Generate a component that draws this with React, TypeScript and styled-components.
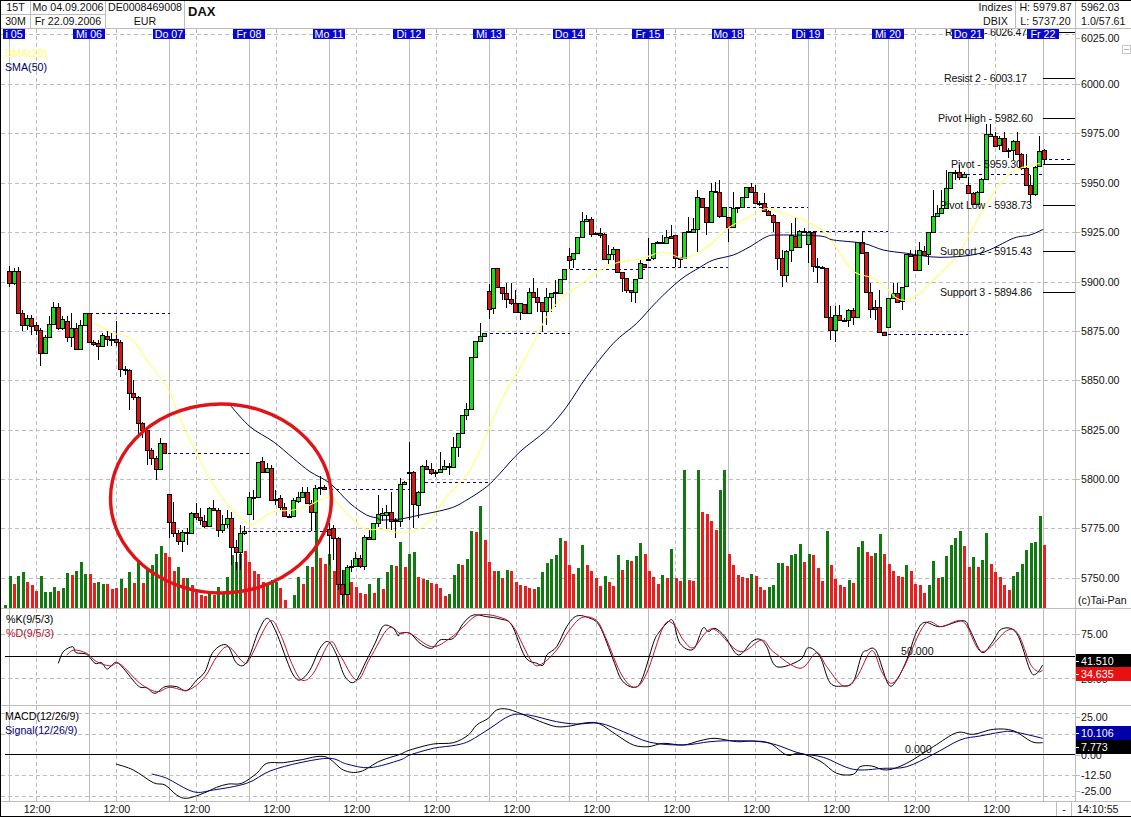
import styled, { createGlobalStyle } from 'styled-components';

type Candle = [number, number, number, number, number];
type Point = [number, number];

const GlobalStyle = createGlobalStyle`
  html, body {
    margin: 0;
    padding: 0;
    background: #fff;
  }
  body {
    font-family: "Liberation Sans", Arial, sans-serif;
    font-size: 10.67px;
    color: #111;
  }
`;

// top, bottom, high, low, green (pixel rows of the price pane), first entry is bar 2
const CANDLES: Candle[] = [
  [271, 283, 266, 287, 0], [271, 283, 268, 285, 1], [271, 313, 267, 314, 0], [313, 325, 310, 331, 0],
  [318, 325, 315, 330, 1], [318, 326, 315, 335, 0], [325, 330, 322, 335, 0], [330, 353, 328, 366, 0],
  [337, 353, 335, 354, 1], [324, 337, 316, 338, 1], [307, 324, 302, 325, 1], [307, 328, 303, 330, 0],
  [319, 328, 316, 330, 1], [321, 337, 316, 342, 0], [328, 337, 313, 347, 1], [328, 349, 323, 350, 0],
  [325, 349, 320, 350, 1], [313, 325, 313, 325, 1], [313, 342, 313, 343, 0], [342, 344, 340, 346, 0],
  [343, 346, 340, 360, 0], [335, 346, 333, 346, 1], [336, 339, 331, 346, 0], [339, 340, 333, 346, 0],
  [339, 342, 321, 346, 0], [342, 369, 340, 377, 0], [369, 370, 366, 375, 0], [370, 393, 369, 410, 0],
  [393, 397, 380, 400, 0], [397, 423, 396, 435, 0], [423, 430, 422, 438, 0], [430, 450, 428, 465, 0],
  [450, 458, 448, 465, 0], [458, 469, 456, 480, 0], [443, 469, 438, 470, 1], [443, 453, 443, 453, 0],
  [494, 522, 494, 538, 0], [522, 533, 502, 537, 0], [533, 541, 530, 545, 0], [532, 541, 530, 552, 1],
  [532, 533, 528, 545, 0], [513, 533, 512, 534, 1], [513, 517, 503, 520, 0], [517, 520, 508, 525, 0],
  [521, 526, 515, 528, 0], [508, 526, 507, 527, 1], [508, 510, 500, 511, 0], [510, 530, 508, 537, 0],
  [524, 530, 515, 533, 1], [518, 524, 510, 528, 1], [518, 547, 512, 565, 0], [547, 552, 540, 570, 0],
  [533, 552, 525, 570, 1], [531, 533, 526, 535, 1], [497, 514, 492, 515, 1], [497, 498, 490, 520, 1],
  [462, 497, 462, 498, 1], [461, 472, 457, 473, 0], [468, 472, 463, 473, 1], [468, 500, 465, 501, 0],
  [499, 500, 490, 505, 0], [498, 507, 495, 510, 0], [507, 516, 503, 517, 0], [516, 517, 514, 518, 0],
  [500, 516, 498, 517, 1], [497, 501, 492, 503, 1], [492, 497, 487, 498, 1], [492, 503, 487, 504, 0],
  [503, 512, 500, 531, 0], [488, 512, 485, 530, 1], [487, 488, 476, 495, 1], [487, 489, 485, 490, 0],
  [529, 535, 523, 565, 0], [528, 538, 525, 560, 0], [538, 584, 537, 590, 0], [584, 594, 570, 605, 0],
  [567, 594, 565, 595, 1], [566, 567, 560, 572, 1], [558, 566, 552, 567, 1], [558, 566, 555, 568, 0],
  [537, 566, 535, 570, 1], [537, 539, 530, 540, 0], [523, 539, 523, 540, 1], [514, 523, 495, 527, 1],
  [513, 515, 508, 521, 1], [512, 515, 505, 529, 1], [512, 521, 492, 530, 0], [520, 521, 518, 538, 0],
  [484, 521, 478, 527, 1], [482, 484, 481, 485, 1], [472, 473, 442, 520, 0], [472, 504, 471, 528, 0],
  [492, 505, 491, 518, 1], [466, 492, 465, 493, 1], [466, 469, 460, 470, 0], [469, 473, 463, 475, 0],
  [472, 473, 470, 477, 0], [469, 472, 452, 473, 1], [466, 469, 460, 470, 1], [466, 467, 463, 475, 0],
  [447, 467, 437, 468, 1], [433, 447, 433, 457, 1], [415, 433, 415, 434, 1], [409, 415, 403, 420, 1],
  [357, 409, 357, 410, 1], [341, 357, 341, 358, 1], [336, 341, 323, 341, 1], [333, 336, 333, 336, 1],
  [291, 309, 284, 319, 0], [268, 308, 268, 314, 1], [268, 287, 268, 288, 0], [287, 293, 287, 300, 0],
  [293, 299, 283, 308, 0], [299, 303, 283, 305, 0], [303, 312, 290, 312, 0], [303, 312, 303, 320, 1],
  [304, 313, 304, 313, 0], [292, 313, 288, 314, 1], [292, 297, 278, 298, 0], [297, 302, 288, 312, 0],
  [302, 311, 302, 332, 0], [297, 311, 288, 325, 1], [293, 297, 293, 312, 1], [292, 293, 280, 307, 0],
  [279, 293, 279, 294, 1], [269, 279, 269, 280, 1], [256, 260, 248, 269, 0], [253, 259, 253, 268, 1],
  [237, 253, 237, 254, 1], [221, 237, 212, 238, 1], [219, 221, 215, 222, 1], [219, 234, 217, 237, 0],
  [233, 234, 232, 235, 0], [233, 235, 228, 238, 0], [234, 259, 233, 260, 0], [254, 259, 245, 264, 1],
  [249, 254, 247, 260, 1], [249, 272, 249, 273, 0], [272, 278, 272, 292, 0], [278, 290, 278, 293, 0],
  [290, 292, 290, 302, 0], [279, 292, 279, 303, 1], [263, 278, 260, 279, 1], [264, 267, 264, 267, 0],
  [259, 260, 238, 260, 0], [243, 258, 243, 260, 1], [242, 243, 241, 244, 1], [242, 243, 235, 244, 1],
  [237, 243, 230, 244, 1], [236, 238, 225, 239, 0], [235, 258, 235, 267, 0], [257, 259, 257, 267, 0],
  [232, 258, 232, 259, 1], [231, 232, 217, 233, 1], [229, 232, 218, 232, 1], [197, 229, 190, 252, 1],
  [198, 207, 198, 208, 0], [207, 222, 207, 235, 0], [191, 222, 183, 222, 1], [191, 192, 182, 193, 1],
  [192, 216, 180, 218, 0], [207, 216, 207, 217, 1], [217, 227, 217, 242, 0], [208, 227, 192, 227, 1],
  [207, 208, 207, 213, 1], [197, 207, 197, 208, 1], [187, 197, 187, 198, 1], [187, 192, 183, 192, 0],
  [192, 203, 185, 204, 0], [203, 204, 201, 206, 0], [203, 211, 193, 212, 0], [211, 215, 210, 216, 0],
  [215, 222, 214, 232, 0], [222, 258, 222, 270, 0], [258, 275, 250, 287, 0], [251, 275, 250, 282, 1],
  [235, 250, 223, 262, 1], [236, 247, 217, 248, 0], [231, 247, 230, 248, 1], [231, 232, 228, 233, 1],
  [232, 244, 231, 263, 1], [232, 266, 231, 272, 0], [266, 267, 258, 283, 0], [267, 268, 266, 269, 0],
  [268, 317, 268, 318, 0], [317, 330, 306, 340, 0], [315, 330, 306, 342, 1], [315, 320, 305, 321, 0],
  [320, 321, 318, 322, 0], [310, 320, 309, 327, 1], [310, 317, 308, 325, 0], [242, 317, 242, 318, 1],
  [242, 253, 232, 254, 0], [252, 292, 252, 293, 0], [292, 309, 283, 318, 0], [307, 309, 300, 320, 0],
  [307, 332, 290, 333, 0], [332, 335, 332, 335, 0], [298, 327, 298, 328, 1], [293, 298, 283, 299, 1],
  [293, 302, 283, 303, 0], [287, 301, 287, 310, 1], [254, 286, 254, 287, 1], [254, 256, 250, 257, 0],
  [255, 270, 250, 271, 0], [250, 270, 242, 271, 1], [251, 255, 246, 256, 0], [232, 254, 232, 265, 1],
  [216, 232, 190, 233, 1], [213, 216, 205, 217, 1], [208, 213, 190, 214, 1], [188, 208, 170, 209, 1],
  [172, 188, 172, 189, 1], [172, 173, 170, 180, 0], [172, 177, 165, 180, 0], [174, 177, 172, 178, 1],
  [185, 193, 177, 194, 0], [193, 204, 192, 204, 0], [192, 204, 191, 205, 1], [179, 192, 178, 193, 1],
  [134, 179, 124, 180, 1], [134, 136, 124, 137, 1], [136, 146, 132, 147, 0], [138, 145, 136, 150, 1],
  [138, 151, 132, 152, 0], [150, 151, 148, 158, 0], [141, 150, 140, 160, 1], [141, 154, 132, 155, 0],
  [154, 168, 153, 170, 0], [168, 185, 154, 186, 0], [185, 194, 175, 203, 0], [167, 194, 166, 196, 1],
  [151, 166, 136, 167, 1], [150, 159, 149, 165, 0],
];

// top row of each volume bar, negative means red, first entry is bar 1
const VOLUMES = [
  605, 576, -584, 576, 572, -582, -585, -591, 576, 592, 592, 587, -591, 588, 573, -575, 571, 562, 574, -574,
  -583, 582, 584, -584, -589, -588, 579, -588, 572, -583, 560, -583, 568, 565, 554, 546, -553, -557, -571, 567,
  -578, 578, -585, -591, -595, -596, 593, -595, 587, 593, 577, 555, 562, 554, -551, -562, -571, -574, -582, 584,
  580, 582, -588, -600, 608, 595, 577, -584, 566, -567, 513, -558, -564, 554, -571, -570, 570, -568, -582, -587,
  -593, -594, 584, -593, 578, -589, 572, 565, -566, 542, -567, 554, 552, -577, -579, 580, -583, -584, -588, -596,
  594, 575, 564, -565, 559, 531, -532, 506, -540, -562, -571, 571, -578, 570, -571, -582, -585, -586, -588, -589,
  587, 572, 563, 559, 555, 538, -541, -565, -574, 568, 545, -565, -571, -578, -586, 576, -582, -586, 555, -570,
  560, -561, 556, 543, -554, -571, -577, -584, 575, -578, 549, -578, -581, 470, -580, -581, 470, -512, -514, -521,
  -530, 490, 470, -554, -565, -575, -577, -578, 574, -576, -587, -590, 587, 585, 563, 563, -566, 555, 554, 544,
  -562, 554, -555, -568, -581, 531, -565, -579, -585, -587, 580, -583, 547, 541, -552, -556, 553, 534, -554, -564,
  -571, -576, -577, 565, -571, -584, -585, -593, 585, 561, -578, 577, 556, 545, 538, 531, -546, -567, 557, -567,
  560, 533, -564, -572, -577, -585, -590, 576, 572, 564, 550, 543, 542, 516, -545,
];

// line points were read off 3x crops, so they carry the crop origin
const crop = (ox: number, oy: number, pts: number[][]): Point[] =>
  pts.map(([x, y]) => [ox + x / 3, oy + y / 3]);

const SMA20: Point[] = [
  ...crop(0, 280, [[282, 130], [340, 160], [370, 165], [405, 188], [440, 240], [500, 320], [530, 390], [560, 460], [590, 520], [630, 600], [680, 670], [730, 720], [760, 733], [800, 705], [830, 693], [880, 690], [930, 675], [970, 655], [1000, 658], [1040, 700], [1090, 745], [1135, 748]]),
  ...crop(380, 180, [[0, 1048], [50, 1057], [110, 1050], [150, 1020], [200, 950], [260, 885], [300, 810], [330, 740], [370, 650], [410, 580], [460, 490], [500, 410], [550, 350], [600, 315], [660, 270], [710, 248], [780, 237], [850, 217], [910, 235], [960, 215], [1000, 185], [1050, 140], [1100, 115]]),
  ...crop(750, 170, [[50, 115], [100, 130], [170, 155], [215, 180], [250, 220], [290, 280], [320, 310], [370, 325], [415, 360], [440, 385], [470, 390], [510, 370]]),
  ...crop(800, 0, [[400, 840], [470, 770], [510, 700], [560, 610], [620, 530], [660, 505], [720, 490]]),
];

const SMA50: Point[] = [
  ...crop(0, 280, [[690, 375], [750, 440], [820, 485], [880, 535], [930, 575], [990, 610], [1050, 670], [1100, 705], [1135, 715]]),
  ...crop(380, 180, [[0, 1020], [60, 1017], [120, 1005], [210, 985], [260, 960], [320, 920], [360, 880], [420, 815], [500, 750], [560, 680], [620, 590], [700, 490], [770, 430], [830, 365], [900, 300], [960, 262], [1000, 240], [1060, 225], [1110, 200]]),
  ...crop(750, 170, [[50, 200], [90, 195], [210, 198], [250, 210], [340, 220], [400, 240], [470, 250]]),
  ...crop(800, 0, [[420, 772], [540, 760], [640, 715], [690, 705], [730, 688]]),
];

const STOCH_K: Point[] = [
  ...crop(0, 600, [[175, 190], [190, 155], [218, 140], [228, 158], [260, 163], [285, 190], [305, 188], [322, 207], [347, 187], [370, 205], [415, 258], [440, 263], [465, 280], [495, 260], [530, 260], [560, 272], [590, 240], [615, 215], [640, 155], [680, 135], [710, 190], [740, 187], [775, 95], [802, 55], [830, 100], [860, 180], [880, 225], [900, 240], [930, 210], [960, 145], [985, 125], [1010, 165], [1035, 230], [1065, 245], [1100, 180], [1125, 130], [1150, 78], [1180, 85], [1195, 108]]),
  ...crop(400, 600, [[0, 100], [30, 100], [60, 130], [95, 145], [120, 120], [160, 115], [190, 70], [220, 45], [260, 50], [300, 57], [335, 75], [375, 170], [410, 190], [430, 195], [440, 165], [470, 140], [500, 80], [530, 48], [570, 55], [600, 80], [640, 180], [665, 240], [700, 262], [725, 240], [760, 130], [775, 100], [805, 65], [820, 65], [840, 130], [880, 148], [908, 85], [925, 95], [945, 85], [975, 110], [1015, 165], [1055, 125], [1080, 118], [1100, 140], [1130, 200]]),
  ...crop(800, 600, [[0, 180], [25, 143], [60, 170], [90, 248], [130, 258], [160, 245], [185, 165], [200, 152], [228, 152], [265, 253], [290, 240], [320, 180], [350, 95], [375, 67], [420, 80], [490, 62], [510, 90], [545, 157], [575, 130], [605, 87], [650, 100], [690, 210], [708, 222], [728, 195]]),
];

const STOCH_D: Point[] = [
  ...crop(0, 600, [[200, 165], [222, 150], [260, 160], [290, 185], [330, 198], [360, 192], [420, 250], [470, 275], [510, 262], [565, 270], [615, 230], [650, 170], [685, 140], [730, 187], [750, 175], [808, 65], [840, 100], [875, 190], [905, 240], [940, 220], [990, 127], [1020, 165], [1070, 240], [1110, 175], [1165, 85], [1200, 100]]),
  ...crop(400, 600, [[30, 100], [95, 140], [150, 115], [190, 80], [235, 45], [300, 52], [340, 80], [395, 185], [425, 192], [470, 150], [505, 95], [545, 53], [590, 62], [620, 120], [665, 225], [705, 262], [740, 220], [790, 80], [820, 72], [850, 120], [880, 143], [920, 95], [950, 92], [1020, 155], [1085, 120], [1120, 155]]),
  ...crop(800, 600, [[0, 205], [50, 158], [80, 200], [130, 258], [170, 232], [215, 152], [245, 215], [275, 250], [310, 205], [375, 72], [425, 80], [490, 65], [545, 155], [620, 92], [655, 103], [690, 190], [715, 215], [728, 210]]),
];

const MACD: Point[] = [
  ...crop(0, 600, [[348, 492], [400, 510], [460, 548], [495, 555], [530, 585], [560, 595], [610, 580], [650, 562], [685, 552], [725, 550], [770, 520], [800, 490], [850, 488], [900, 480], [975, 470], [1030, 510], [1080, 515], [1140, 483]]),
  ...crop(400, 600, [[0, 463], [30, 450], [100, 432], [160, 428], [205, 405], [230, 375], [265, 355], [290, 330], [325, 328], [380, 348], [430, 368], [470, 380], [510, 378], [560, 368], [600, 372], [650, 405], [700, 435], [745, 440], [790, 430], [850, 435], [900, 422], [945, 415], [1010, 425], [1060, 423], [1110, 430], [1160, 465]]),
  ...crop(800, 600, [[0, 460], [60, 483], [110, 520], [160, 523], [180, 500], [215, 498], [260, 510], [320, 490], [400, 440], [470, 398], [520, 403], [580, 388], [640, 392], [695, 425], [728, 428]]),
];

const SIGNAL: Point[] = [
  ...crop(0, 600, [[455, 522], [500, 535], [580, 575], [640, 570], [740, 550], [810, 513], [900, 488], [990, 475], [1040, 492], [1110, 503]]),
  ...crop(400, 600, [[0, 480], [30, 465], [100, 445], [170, 435], [210, 422], [270, 385], [330, 347], [385, 345], [470, 365], [530, 372], [600, 370], [670, 395], [750, 427], [850, 435], [930, 425], [1000, 422], [1080, 425], [1130, 435]]),
  ...crop(800, 600, [[0, 460], [70, 472], [160, 508], [250, 505], [320, 500], [400, 463], [480, 420], [540, 408], [600, 397], [640, 395], [728, 415]]),
];

const DAY_LINES = [9, 89, 169, 249, 329, 409, 489, 569, 648, 728, 808, 888, 968, 1043];
const NOON_LINES = [36, 116, 196, 276, 356, 436, 516, 596, 675, 755, 835, 915, 995];
const PRICE_ROWS = [34, 84, 133, 183, 232, 282, 331, 380, 430, 479, 528, 578];

const DAY_TAGS: [string, number][] = [
  ['i 05', 3], ['Mi 06', 73], ['Do 07', 153], ['Fr 08', 233], ['Mo 11', 313], ['Di 12', 393], ['Mi 13', 473],
  ['Do 14', 553], ['Fr 15', 632], ['Mo 18', 712], ['Di 19', 792], ['Mi 20', 872], ['Do 21', 952], ['Fr 22', 1027],
];

const PIVOT_DASHES: [number, number, number][] = [
  [90, 170, 313], [168, 250, 453], [248, 330, 531], [330, 410, 489], [425, 490, 482], [490, 570, 333],
  [570, 648, 269], [648, 728, 267], [729, 808, 207], [808, 888, 231], [888, 968, 334], [967, 1043, 174], [1043, 1070, 159],
];

const LEVELS: [string, number, number, number][] = [
  ['Resist 1 - 6026.47', 945, 82, 32],
  ['Resist 2 - 6003.17', 944, 83, 78],
  ['Pivot High - 5982.60', 938, 95, 118],
  ['Pivot - 5959.30', 951, 71, 164],
  ['Pivot Low - 5938.73', 940, 92, 205],
  ['Support 2 - 5915.43', 940, 92, 251],
  ['Support 3 - 5894.86', 940, 92, 292],
];

const PRICE_TICKS: [string, number][] = [
  ['6025.00', 38], ['6000.00', 84], ['5975.00', 133], ['5950.00', 183], ['5925.00', 232], ['5900.00', 282],
  ['5875.00', 331], ['5850.00', 380], ['5825.00', 430], ['5800.00', 479], ['5775.00', 528], ['5750.00', 578],
];

const barX = (k: number) => 0.7 + 4.44 * k;

// catmull-rom through the measured points, the lines in the chart are soft
const toPath = (pts: Point[]) => {
  let d = `M${pts[0][0].toFixed(1)} ${pts[0][1].toFixed(1)}`;
  for (let i = 0; i < pts.length - 1; i++) {
    const p0 = pts[Math.max(i - 1, 0)];
    const p1 = pts[i];
    const p2 = pts[i + 1];
    const p3 = pts[Math.min(i + 2, pts.length - 1)];
    const c1x = p1[0] + (p2[0] - p0[0]) / 6;
    const c1y = p1[1] + (p2[1] - p0[1]) / 6;
    const c2x = p2[0] - (p3[0] - p1[0]) / 6;
    const c2y = p2[1] - (p3[1] - p1[1]) / 6;
    d += `C${c1x.toFixed(1)} ${c1y.toFixed(1)} ${c2x.toFixed(1)} ${c2y.toFixed(1)} ${p2[0].toFixed(1)} ${p2[1].toFixed(1)}`;
  }
  return d;
};

function VerticalGrid({ top, bottom }: { top: number; bottom: number }) {
  return (
    <>
      {NOON_LINES.map((x) => (
        <GridDash key={x} x1={x + 0.5} x2={x + 0.5} y1={top} y2={bottom} />
      ))}
      {DAY_LINES.map((x) => (
        <GridSolid key={x} x1={x + 0.5} x2={x + 0.5} y1={top} y2={bottom} />
      ))}
    </>
  );
}

function PricePlot() {
  return (
    <Plot viewBox="1 29 1074 579" width="1074" height="579">
      <VerticalGrid top={29} bottom={608} />
      {PRICE_ROWS.map((y) => (
        <GridDash key={y} x1={1} x2={1075} y1={y + 0.5} y2={y + 0.5} />
      ))}

      {VOLUMES.map((v, i) => {
        const top = Math.abs(v);
        return (
          <VolumeBar
            key={i}
            $up={v > 0}
            x={Math.round(barX(i + 1)) - 1}
            y={top}
            width={3}
            height={608 - top}
          />
        );
      })}

      {PIVOT_DASHES.map(([x1, x2, y]) => (
        <PivotDash key={`${x1}-${y}`} x1={x1} x2={x2} y1={y + 0.5} y2={y + 0.5} />
      ))}

      {CANDLES.map(([top, bottom, high, low, up], i) => {
        const c = Math.floor(barX(i + 2)) + 0.5;
        return (
          <g key={i}>
            <Wick x1={c} x2={c} y1={high} y2={low} />
            <CandleBody $up={!!up} x={c - 2} y={top + 0.5} width={4} height={Math.max(bottom - top, 1)} />
          </g>
        );
      })}

      <Sma20Line d={toPath(SMA20)} />
      <Sma50Line d={toPath(SMA50)} />

      {LEVELS.map(([label, x, width, y]) => (
        <g key={label}>
          <PlotText x={x} y={y + 4} textLength={width} lengthAdjust="spacing">
            {label}
          </PlotText>
          <LevelLine x1={1043} x2={1075} y1={y + 0.5} y2={y + 0.5} />
        </g>
      ))}

      {DAY_TAGS.map(([label, x]) => (
        <g key={label}>
          <DayTagBox x={x} y={29} width={x === 3 ? 22 : 32} height={10} />
          <DayTagText x={x + (x === 3 ? 11 : 16)} y={38}>
            {label}
          </DayTagText>
        </g>
      ))}

      <Legend $color="#ffff66" x={5} y={57}>SMA(20)</Legend>
      <Legend $color="#000066" x={5} y={71}>SMA(50)</Legend>

      <Circle cx={221} cy={498.5} rx={110.5} ry={94.5} />
    </Plot>
  );
}

function StochPlot() {
  return (
    <Plot viewBox="1 609 1074 96" width="1074" height="96">
      <VerticalGrid top={609} bottom={705} />
      {[634, 678].map((y) => (
        <GridDash key={y} x1={1} x2={1075} y1={y + 0.5} y2={y + 0.5} />
      ))}
      <ZeroLine x1={5} x2={1075} y1={656.5} y2={656.5} />
      <PlotText x={901} y={655}>50.000</PlotText>
      <IndicatorLine $color="#000" d={toPath(STOCH_K)} />
      <IndicatorLine $color="#c0102a" d={toPath(STOCH_D)} />
      <Legend $color="#000" x={6} y={623}>%K(9/5/3)</Legend>
      <Legend $color="#b01030" x={6} y={637}>%D(9/5/3)</Legend>
    </Plot>
  );
}

function MacdPlot() {
  return (
    <Plot viewBox="1 706 1074 95" width="1074" height="95">
      <VerticalGrid top={706} bottom={801} />
      {[713, 734, 775, 796].map((y) => (
        <GridDash key={y} x1={1} x2={1075} y1={y + 0.5} y2={y + 0.5} />
      ))}
      <ZeroLine x1={5} x2={1075} y1={754.5} y2={754.5} />
      <PlotText x={905} y={753}>0.000</PlotText>
      <IndicatorLine $color="#000" d={toPath(MACD)} />
      <IndicatorLine $color="#000080" d={toPath(SIGNAL)} />
      <Legend $color="#000" x={5} y={720}>MACD(12/26/9)</Legend>
      <Legend $color="#000080" x={5} y={734}>Signal(12/26/9)</Legend>
    </Plot>
  );
}

export default function App() {
  return (
    <Window>
      <GlobalStyle />
      <Header>
        <InfoCell $width={30} $split>
          <span>15T</span>
          <span>30M</span>
        </InfoCell>
        <InfoCell $width={75} $split>
          <span>Mo 04.09.2006</span>
          <span>Fr 22.09.2006</span>
        </InfoCell>
        <InfoCell $width={79}>
          <span>DE0008469008</span>
          <span>EUR</span>
        </InfoCell>
        <Title>
          <strong>DAX</strong>
        </Title>
        <InfoCell $width={40}>
          <span>Indizes</span>
          <span>DBIX</span>
        </InfoCell>
        <InfoCell $width={60}>
          <span>H: 5979.87</span>
          <span>L: 5737.20</span>
        </InfoCell>
        <QuoteCell>
          <span>5962.03</span>
          <span>1.0/57.61</span>
        </QuoteCell>
      </Header>

      <PaneRow $height={580}>
        <PricePlot />
        <Axis>
          {PRICE_TICKS.map(([label, y]) => (
            <AxisTick key={label} $top={y - 29}>{label}</AxisTick>
          ))}
          <CollapseBox />
          <Copyright>(c)Tai-Pan</Copyright>
        </Axis>
      </PaneRow>

      <PaneRow $height={97}>
        <StochPlot />
        <Axis>
          <AxisTick $top={25}>75.00</AxisTick>
          <AxisTick $top={70}>25.00</AxisTick>
          <Readout $top={45} $bg="#000">41.510</Readout>
          <Readout $top={58} $bg="#e81010">34.635</Readout>
        </Axis>
      </PaneRow>

      <PaneRow $height={96}>
        <MacdPlot />
        <Axis>
          <AxisTick $top={11}>25.00</AxisTick>
          <AxisTick $top={49}>0.00</AxisTick>
          <AxisTick $top={69}>-12.50</AxisTick>
          <AxisTick $top={85}>-25.00</AxisTick>
          <Readout $top={20} $bg="#0000a8">10.106</Readout>
          <Readout $top={34} $bg="#000">7.773</Readout>
        </Axis>
      </PaneRow>

      <TimeRow>
        <TimeLabels>
          {NOON_LINES.map((x) => (
            <TimeLabel key={x}>12:00</TimeLabel>
          ))}
        </TimeLabels>
        <TimeDash>-</TimeDash>
        <Clock>14:10:55</Clock>
      </TimeRow>
    </Window>
  );
}

const Window = styled.div`
  width: 1131px;
  height: 817px;
  box-sizing: border-box;
  display: flex;
  flex-direction: column;
  overflow: hidden;
  background: #fff;
  border-top: 1px solid #000;
  border-bottom: 1px solid #000;
  border-left: 1px solid #000;
`;

const Header = styled.div`
  height: 28px;
  box-sizing: border-box;
  display: flex;
  flex: none;
  border-bottom: 1px solid #bdbdbd;
  line-height: 13px;
`;

const InfoCell = styled.div<{ $width: number; $split?: boolean }>`
  width: ${({ $width }) => $width}px;
  box-sizing: border-box;
  flex: none;
  display: grid;
  grid-template-rows: 14px 13px;
  border-right: 1px solid #bdbdbd;
  text-align: center;
  white-space: nowrap;

  span:first-child {
    line-height: 13px;
    border-bottom: 1px solid ${({ $split }) => ($split ? '#bdbdbd' : 'transparent')};
  }
`;

const QuoteCell = styled(InfoCell).attrs({ $width: 55 })`
  padding-left: 5px;
  border-right: 0;
  text-align: left;
`;

const Title = styled.div`
  flex: 1;
  padding: 3px 0 0 3px;
  font-size: 13px;
  line-height: 16px;
`;

const PaneRow = styled.div<{ $height: number }>`
  height: ${({ $height }) => $height}px;
  box-sizing: border-box;
  display: flex;
  flex: none;
  border-bottom: 1px solid #bdbdbd;
`;

const Plot = styled.svg`
  display: block;
  flex: none;
  overflow: hidden;
  font-family: "Liberation Sans", Arial, sans-serif;
  font-size: 10.67px;
`;

const Axis = styled.div`
  position: relative;
  flex: 1;
  border-left: 1px solid #bdbdbd;
  overflow: hidden;
`;

const AxisTick = styled.div<{ $top: number }>`
  position: absolute;
  left: 5px;
  top: ${({ $top }) => $top}px;
  transform: translateY(-50%);
  line-height: 12px;
  white-space: nowrap;

  &::before {
    content: '';
    position: absolute;
    left: -5px;
    top: 6px;
    width: 4px;
    height: 1px;
    background: #bdbdbd;
  }
`;

const Readout = styled.div<{ $top: number; $bg: string }>`
  position: absolute;
  left: 0;
  right: 0;
  top: ${({ $top }) => $top}px;
  height: 14px;
  padding-left: 5px;
  background: ${({ $bg }) => $bg};
  color: #fff;
  line-height: 14px;

  &::before {
    content: '';
    position: absolute;
    left: 0;
    top: 7px;
    width: 3px;
    height: 1px;
    background: #fff;
  }
`;

const CollapseBox = styled.div`
  position: absolute;
  left: 46px;
  top: 16px;
  width: 7px;
  height: 7px;
  border: 1px solid #c8c8c8;

  &::after {
    content: '';
    position: absolute;
    left: 1px;
    right: 1px;
    top: 3px;
    height: 1px;
    background: #b0b0b0;
  }
`;

const Copyright = styled.div`
  position: absolute;
  left: 2px;
  top: 565px;
  line-height: 12px;
  white-space: nowrap;
`;

const TimeRow = styled.div`
  flex: 1;
  display: flex;
  line-height: 14px;
`;

const TimeLabels = styled.div`
  width: 1059px;
  flex: none;
  display: flex;
  margin-left: -4px;
`;

const TimeLabel = styled.div`
  width: 79.97px;
  flex: none;
  text-align: center;
`;

const TimeDash = styled.div`
  width: 16px;
  flex: none;
  box-sizing: border-box;
  border-left: 1px solid #bdbdbd;
  border-right: 1px solid #bdbdbd;
  text-align: center;
`;

const Clock = styled.div`
  padding-left: 5px;
  white-space: nowrap;
`;

const GridDash = styled.line`
  stroke: #bdbdbd;
  stroke-width: 1;
  stroke-dasharray: 4 3;
`;

const GridSolid = styled.line`
  stroke: #bdbdbd;
  stroke-width: 1;
`;

const VolumeBar = styled.rect<{ $up: boolean }>`
  fill: ${({ $up }) => ($up ? '#107a10' : '#ee1c1c')};
`;

const PivotDash = styled.line`
  stroke: #0000a0;
  stroke-width: 1;
  stroke-dasharray: 3 3;
`;

const Sma20Line = styled.path`
  fill: none;
  stroke: #ffff70;
  stroke-width: 1.1;
`;

const Sma50Line = styled.path`
  fill: none;
  stroke: #000060;
  stroke-width: 1;
`;

const IndicatorLine = styled.path<{ $color: string }>`
  fill: none;
  stroke: ${({ $color }) => $color};
  stroke-width: 1;
`;

const Wick = styled.line`
  stroke: #000;
  stroke-width: 1;
`;

const CandleBody = styled.rect<{ $up: boolean }>`
  fill: ${({ $up }) => ($up ? '#18e018' : '#dc1414')};
  stroke: #000;
  stroke-width: 1;
`;

const PlotText = styled.text`
  fill: #111;
`;

const LevelLine = styled.line`
  stroke: #000;
  stroke-width: 1;
`;

const DayTagBox = styled.rect`
  fill: #0808d0;
`;

const DayTagText = styled.text`
  fill: #fff;
  text-anchor: middle;
`;

const Legend = styled.text<{ $color: string }>`
  fill: ${({ $color }) => $color};
`;

const ZeroLine = styled.line`
  stroke: #000;
  stroke-width: 1;
`;

const Circle = styled.ellipse`
  fill: none;
  stroke: #e01418;
  stroke-width: 3.4;
`;
